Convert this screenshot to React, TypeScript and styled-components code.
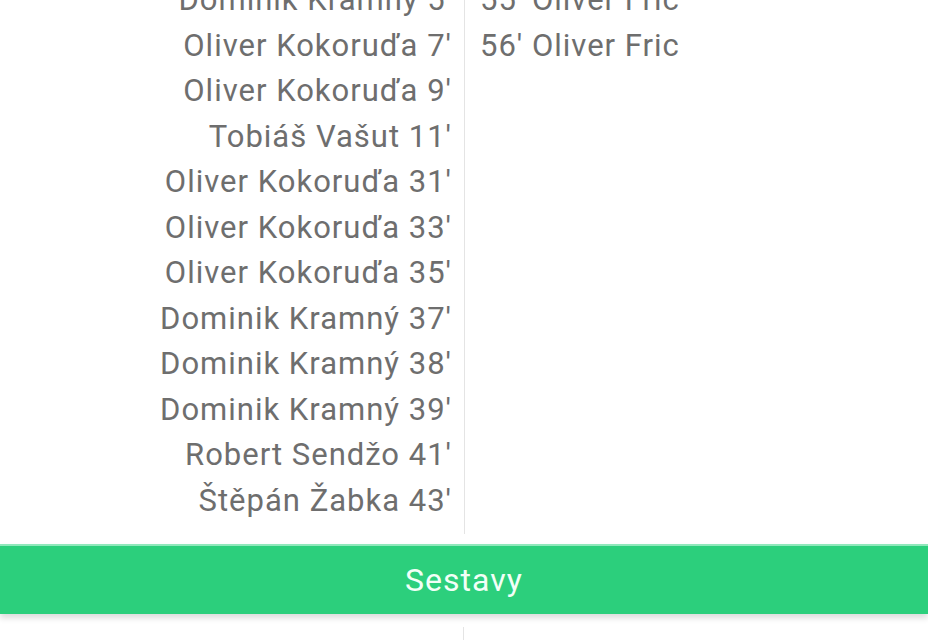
import styled, { createGlobalStyle } from "styled-components";

const GlobalStyle = createGlobalStyle`
	html, body {
		margin: 0;
		padding: 0;
		background: #ffffff;
		overflow: hidden;
	}
`;

const Page = styled.div`
	width: 928px;
	height: 640px;
	overflow: hidden;
	font-family: Roboto, "Noto Sans", sans-serif;
`;

const Goals = styled.div`
	display: grid;
	grid-template-columns: 464px 1px 1fr;
	margin-top: -23px;
`;

const Column = styled.div<{ side: "home" | "away" }>`
	display: flex;
	flex-direction: column;
	padding-bottom: 11px;
	text-align: ${props => props.side === "home" ? "right" : "left"};
	${props => props.side === "home" ? "padding-right: 12px;" : "padding-left: 15px;"}
`;

const Divider = styled.div`
	background: #e4e4e4;
`;

const Goal = styled.div`
	height: 45.5px;
	line-height: 45.5px;
	font-size: 31px;
	letter-spacing: 1px;
	color: #6e6e6e;
	white-space: nowrap;
`;

const SectionBar = styled.div`
	margin-top: 10px;
	height: 68px;
	display: flex;
	align-items: center;
	justify-content: center;
	background: #2ccf7c;
	border-top: 2px solid #8fe8bb;
	color: #f2fff7;
	font-size: 32px;
	letter-spacing: 1px;
	box-shadow: 0 4px 6px rgba(0, 0, 0, 0.14);
	position: relative;
	z-index: 1;
`;

const Below = styled.div`
	display: grid;
	grid-template-columns: 463px 1px 1fr;
	height: 40px;
	margin-top: 13px;
`;

const home = [
	"Dominik Kramný 5'",
	"Oliver Kokoruďa 7'",
	"Oliver Kokoruďa 9'",
	"Tobiáš Vašut 11'",
	"Oliver Kokoruďa 31'",
	"Oliver Kokoruďa 33'",
	"Oliver Kokoruďa 35'",
	"Dominik Kramný 37'",
	"Dominik Kramný 38'",
	"Dominik Kramný 39'",
	"Robert Sendžo 41'",
	"Štěpán Žabka 43'",
];

const away = ["55' Oliver Fric", "56' Oliver Fric"];

const App = () => {
	return (
		<Page>
			<GlobalStyle />
			<Goals>
				<Column side="home">
					{home.map((g, i) => <Goal key={i}>{g}</Goal>)}
				</Column>
				<Divider />
				<Column side="away">
					{away.map((g, i) => <Goal key={i}>{g}</Goal>)}
				</Column>
			</Goals>
			<SectionBar>Sestavy</SectionBar>
			<Below>
				<div />
				<Divider />
				<div />
			</Below>
		</Page>
	);
};

export default App;
